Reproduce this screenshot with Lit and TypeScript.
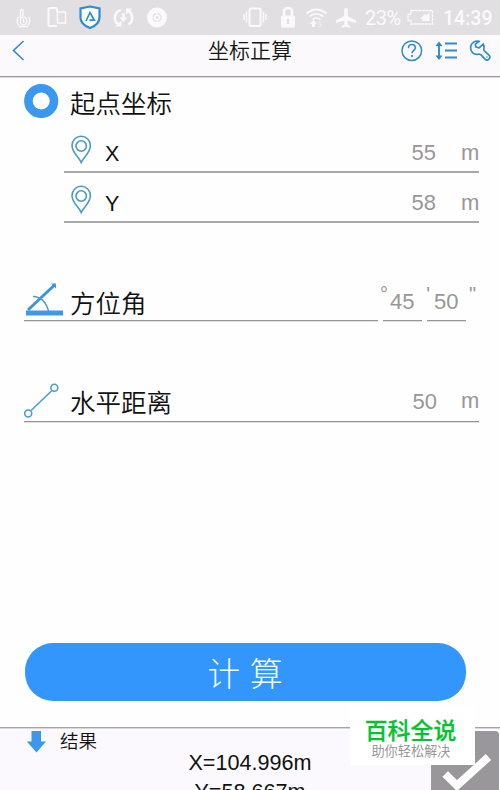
import { LitElement, html, css } from "lit";
import { customElement, property } from "lit/decorators.js";

const white = "#fbfafb";
const blue = "#318bc8";

@customElement("status-bar")
class StatusBar extends LitElement {
  static styles = css`
    :host { display: flex; height: 35px; background: #e1dfe1; color: #fbfafb; font-family: Roboto, sans-serif; overflow: hidden; }
    .icons { width: 364px; height: 35px; flex: none; }
    .battery { width: 28px; height: 35px; flex: none; margin-left: 5px; }
    .txt { line-height: 37px; font-size: 20px; white-space: nowrap; }
    .pct { width: 37px; letter-spacing: -0.5px; padding-left: 1px; box-sizing: border-box; }
    .time { margin-left: 9px; font-weight: 500; font-size: 19.5px; }
  `;
  render() {
    return html`
      <svg class="icons" viewBox="0 0 364 35" fill="none" stroke=${white} stroke-width="1.5">
        <path d="M20.500 19v-8.500q1.200-2 2.400 0V16M20.500 12" stroke-width="1.300" />
        <ellipse cx="23.500" cy="21" rx="3.300" ry="4" stroke-width="1.300" />
        <path d="M23.500 18.500v4.500M18.500 17q-3 4 .5 8.500M28.500 17q3 4-.5 8.500M19 26.500h9" stroke-width="1.300" />
        <path d="M57 12V9.500q0-1.500-1.500-1.500H50q-1.500 0-1.500 1.500v15q0 1.500 1.500 1.500h7" stroke-width="2" />
        <rect x="57.500" y="12" width="8" height="11" />
        <path d="M90 6.500l9.500 2v9q0 7-9.500 10.500-9.500-3.500-9.500-10.500v-9z" fill="#f7fcff" stroke="#318bd0" stroke-width="2.200" />
        <path d="M86 21L90 12.500l4.300 7.700H89.500" stroke="#318bd0" stroke-width="1.700" />
        <path d="M121 10a8 8 0 0 0-2.500 14.500M126 10a8 8 0 0 1 2.500 14.500M123.500 13v6" stroke-width="2.500" />
        <path d="M115 26.500h6.500v-6zM132 8.500h-6v6zM119.500 17.500h8l-4 4.500z" fill=${white} stroke="none" />
        <circle cx="157" cy="17.500" r="10" fill=${white} stroke="none" />
        <circle cx="157" cy="17.500" r="4" stroke="#e1dfe1" stroke-width="1.200" stroke-dasharray="5 1.300" />
        <circle cx="157" cy="17.500" r="1.400" fill="#e1dfe1" stroke="none" />
        <rect x="249.500" y="8.500" width="11" height="17.500" rx="1.500" stroke-width="2" />
        <path d="M246.500 11.500v11M263.500 11.500v11M244 14v6M266 14v6" />
        <rect x="281" y="15.500" width="14" height="12" rx="1.500" fill=${white} stroke="none" />
        <path d="M284 16v-4q0-4 4-4t4 4v4" stroke-width="2.600" />
        <path d="M288 19v5" stroke="#e1dfe1" stroke-width="2.200" />
        <path d="M306.500 13.500q10-8 20 0M309.500 16.500q7-5.500 14 0M312.500 19.500q4-3 8 0" stroke-width="1.700" />
        <path d="M310 24l3.500-4 3.500 4h-2v3h-3v-3z" fill=${white} stroke="none" />
        <path d="M318 22h2v3h2l-3 2" stroke-width="1" opacity=".6" />
        <path d="M346 8q1.800 0 1.800 3v5l8.200 4.500v2.500l-8.200-2.500v4l2.500 2v1.500l-4.300-1.200-4.300 1.200v-1.500l2.500-2v-4L336 23v-2.500l8.200-4.500v-5q0-3 1.800-3z" fill=${white} stroke="none" />
      </svg>
      <div class="txt pct">23%</div>
      <svg class="battery" viewBox="0 0 28 35" fill="none" stroke=${white} stroke-width="1.300">
        <path d="M5 10.500h21.500v13.500H5v-3.500H2v-6h3z" stroke-dasharray="3 .6" />
        <path d="M14 19l5-5 1 1.500 3.500-3v8.500h-8l1.500-2z" fill=${white} stroke="none" />
      </svg>
      <div class="txt time">14:39</div>
    `;
  }
}

@customElement("title-bar")
class TitleBar extends LitElement {
  static styles = css`
    :host { display: grid; grid-template-columns: 100px 1fr 100px; height: 43px; box-sizing: border-box; background: #fbf9fc; border-bottom: 1px solid #dcdade; box-shadow: inset 0 -1px #99979b; }
    .title { text-align: center; font-size: 21px; font-weight: 350; line-height: 32px; color: #161616; }
    svg { width: 100px; height: 41px; display: block; }
  `;
  render() {
    return html`
      <svg viewBox="0 0 100 41" fill="none" stroke=${blue} stroke-width="1.600"><path d="M23.500 6L13.500 15.500l10 9.500" /></svg>
      <div class="title">坐标正算</div>
      <svg viewBox="0 0 100 41" fill="none" stroke=${blue} stroke-width="1.500">
        <circle cx="11.800" cy="15.700" r="9.800" />
        <path d="M8.500 13.300q0-3.700 3.400-3.700t3.400 3.300c0 2.400-3.300 2.500-3.300 5.300" />
        <circle cx="12" cy="21" r="1.100" fill=${blue} stroke="none" />
        <path d="M39 8.500v14M45 8.500h12M45 15.500h12M45 22.500h12" stroke-width="1.900" />
        <path d="M35.500 11l3.500-4.500 3.500 4.500zM35.500 20.500h7L39 25z" fill=${blue} stroke="none" />
        <path d="M80 6.300c-4-1.200-8.300 1.500-8.800 5.700-.5 4.500 3 8 7.800 7.200 1.500-.3 2.300.2 3.200 1.200l3.300 3.700q2 1.900 4 0t0-4l-4.500-4.200c-1-1-.8-1.800-.5-3 .3-1.300 0-2.600-.7-3.900l-4 3.800-3.300-.8-.7-2.900z" transform="translate(-.6 0)" stroke-width="1.700" stroke-linejoin="round" />
        <circle cx="87" cy="22" r=".7" fill=${blue} stroke="none" />
      </svg>
    `;
  }
}

@customElement("value-field")
class ValueField extends LitElement {
  @property() label = "";
  @property() value = "";
  static styles = css`
    :host { display: flex; height: 50px; margin-left: 64px; margin-right: 21px; box-sizing: border-box; border-bottom: 2px solid #aaa8aa; color: #989698; font: 22px "Liberation Sans", sans-serif; line-height: 60px; }
    svg { width: 22px; height: 30px; margin: 12px 0 0 6px; }
    .label { flex: 1; padding-left: 13px; color: #111; font-size: 21.500px; line-height: 63px; }
    .value { margin-right: 25px; }
    .unit { width: 18px; line-height: 59px; }
  `;
  render() {
    return html`
      <svg viewBox="0 0 22 30" fill="none" stroke="#4c9bc2" stroke-width="1.600">
        <path d="M11.200 27.500C9 22 2 18 2 10.500a9.200 9.200 0 0 1 18.400 0C20.400 18 13.500 22 11.200 27.500z" />
        <circle cx="11.200" cy="11" r="5.200" />
      </svg>
      <div class="label">${this.label}</div>
      <div class="value">${this.value}</div>
      <div class="unit">m</div>
    `;
  }
}

@customElement("app-root")
class AppRoot extends LitElement {
  static styles = css`
    :host { display: block; position: relative; width: 500px; height: 790px; overflow: hidden; background: #fefefe; color: #111; font-family: "Liberation Sans", "Noto Sans CJK SC", sans-serif; }
    svg { display: block; flex: none; }
    .start { display: flex; height: 45px; padding-left: 24px; }
    .ring { width: 35px; height: 35px; margin-top: 5px; }
    .name { font-size: 25.500px; font-weight: 350; line-height: 53px; margin-left: 11px; white-space: nowrap; }
    .angle { display: grid; grid-template-columns: 354px 39px 39px; grid-template-rows: 48px; column-gap: 5px; height: 48px; margin: 50px 0 0 24px; }
    .cell { display: flex; box-sizing: border-box; border-bottom: 1px solid #969496; box-shadow: 0 1px #e2e0e2; font-size: 22px; line-height: 58px; color: #989698; position: relative; }
    .cell .name { color: #111; line-height: 62px; margin-left: 7px; }
    .cell .num { padding-left: 7px; }
    .mark { position: absolute; font-size: 20px; line-height: 20px; top: 11px; color: #989698; }
    .deg { right: -10px; }
    .min { right: -8px; }
    .sec { right: -10px; }
    .aicon { width: 39px; height: 44px; }
    .distance { display: flex; box-sizing: border-box; height: 51px; margin: 50px 21px 0 24px; border-bottom: 1px solid #969496; box-shadow: 0 1px #e2e0e2; color: #989698; font-size: 22px; line-height: 62px; }
    .distance .name { flex: 1; color: #111; line-height: 65px; margin-left: 6px; }
    .distance .num { margin-right: 24px; }
    .distance .unit { width: 18px; line-height: 60px; }
    .dicon { width: 40px; height: 50px; }
    .button { width: 441px; height: 58px; margin: 221px 0 0 25px; border-radius: 28px; background: #3296fc; color: #f3fbff; font: 300 33px "Noto Sans CJK SC", sans-serif; line-height: 58px; text-align: center; word-spacing: 2px; text-indent: -1px; }
    .result { margin-top: 26px; height: 64px; box-sizing: border-box; border-top: 1px solid #a5a3a6; background: #fbf9fd; box-shadow: inset 0 1px #dad8dc; position: relative; }
    .head { display: flex; height: 20px; font-size: 18.500px; font-weight: 350; line-height: 28px; padding-left: 26px; }
    .head svg { width: 22px; height: 28px; margin-right: 12px; }
    .line { text-align: center; font-size: 21.600px; line-height: 29px; }
    .check { position: absolute; left: 431px; top: 3px; width: 69px; height: 62px; }
    .brand { position: absolute; left: 350px; top: 706px; width: 125px; height: 59px; background: #fff; text-align: center; font-family: "Noto Sans CJK SC", sans-serif; white-space: nowrap; }
    .big { color: #06c22f; font-size: 22.900px; font-weight: 500; -webkit-text-stroke: .25px #06c22f; line-height: 24px; padding-top: 11px; margin-left: -4px; }
    .small { color: #8e8e8e; font-size: 13.200px; font-weight: 350; line-height: 18px; padding-top: 1px; margin-left: -3px; }
  `;
  render() {
    return html`
      <status-bar></status-bar>
      <title-bar></title-bar>
      <div class="start">
        <svg class="ring" viewBox="0 0 35 35"><circle cx="17.200" cy="18" r="12.800" fill="#fff" stroke="#3a98ee" stroke-width="8.600" /></svg>
        <div class="name">起点坐标</div>
      </div>
      <value-field label="X" value="55"></value-field>
      <value-field label="Y" value="58"></value-field>
      <div class="angle">
        <div class="cell">
          <svg class="aicon" viewBox="0 0 39 44" fill="none" stroke="#3c94df">
            <path d="M4 37L30.500 12" stroke-width="3" />
            <path d="M27 10.500h5v5z" fill="#3c94df" stroke="none" />
            <path d="M9 23.500q12 .5 15.500 14.500" stroke="#4c9bc8" stroke-width="1.400" />
            <rect x="2" y="37.500" width="37" height="5" fill="#3f99ea" stroke="none" />
          </svg>
          <div class="name">方位角</div>
          <span class="mark deg">°</span>
        </div>
        <div class="cell"><div class="num">45</div><span class="mark min">'</span></div>
        <div class="cell"><div class="num">50</div><span class="mark sec">"</span></div>
      </div>
      <div class="distance">
        <svg class="dicon" viewBox="0 0 40 50" fill="none" stroke="#4c9fc8" stroke-width="1.600">
          <path d="M7 39.500L27.500 20" /><circle cx="4.200" cy="42.500" r="3.500" /><circle cx="30.300" cy="16.800" r="3.500" />
        </svg>
        <div class="name">水平距离</div>
        <div class="num">50</div><div class="unit">m</div>
      </div>
      <div class="button">计 算</div>
      <div class="result">
        <div class="head">
          <svg viewBox="0 0 22 28"><path d="M5.500 3h9.500v10.500h5L10.500 24.500.800 13.500h4.700z" fill="#3a98ee" /></svg>
          结果
        </div>
        <div class="line">X=104.996m</div>
        <div class="line">Y=58.667m</div>
        <svg class="check" viewBox="0 0 69 62">
          <path d="M0 0h64q4 0 4 4v58H0z" fill="#99979a" />
          <path d="M14.200 43l11.800 11.500L57.500 26" fill="none" stroke="#fff" stroke-width="8" />
        </svg>
      </div>
      <div class="brand"><div class="big">百科全说</div><div class="small">助你轻松解决</div></div>
    `;
  }
}
